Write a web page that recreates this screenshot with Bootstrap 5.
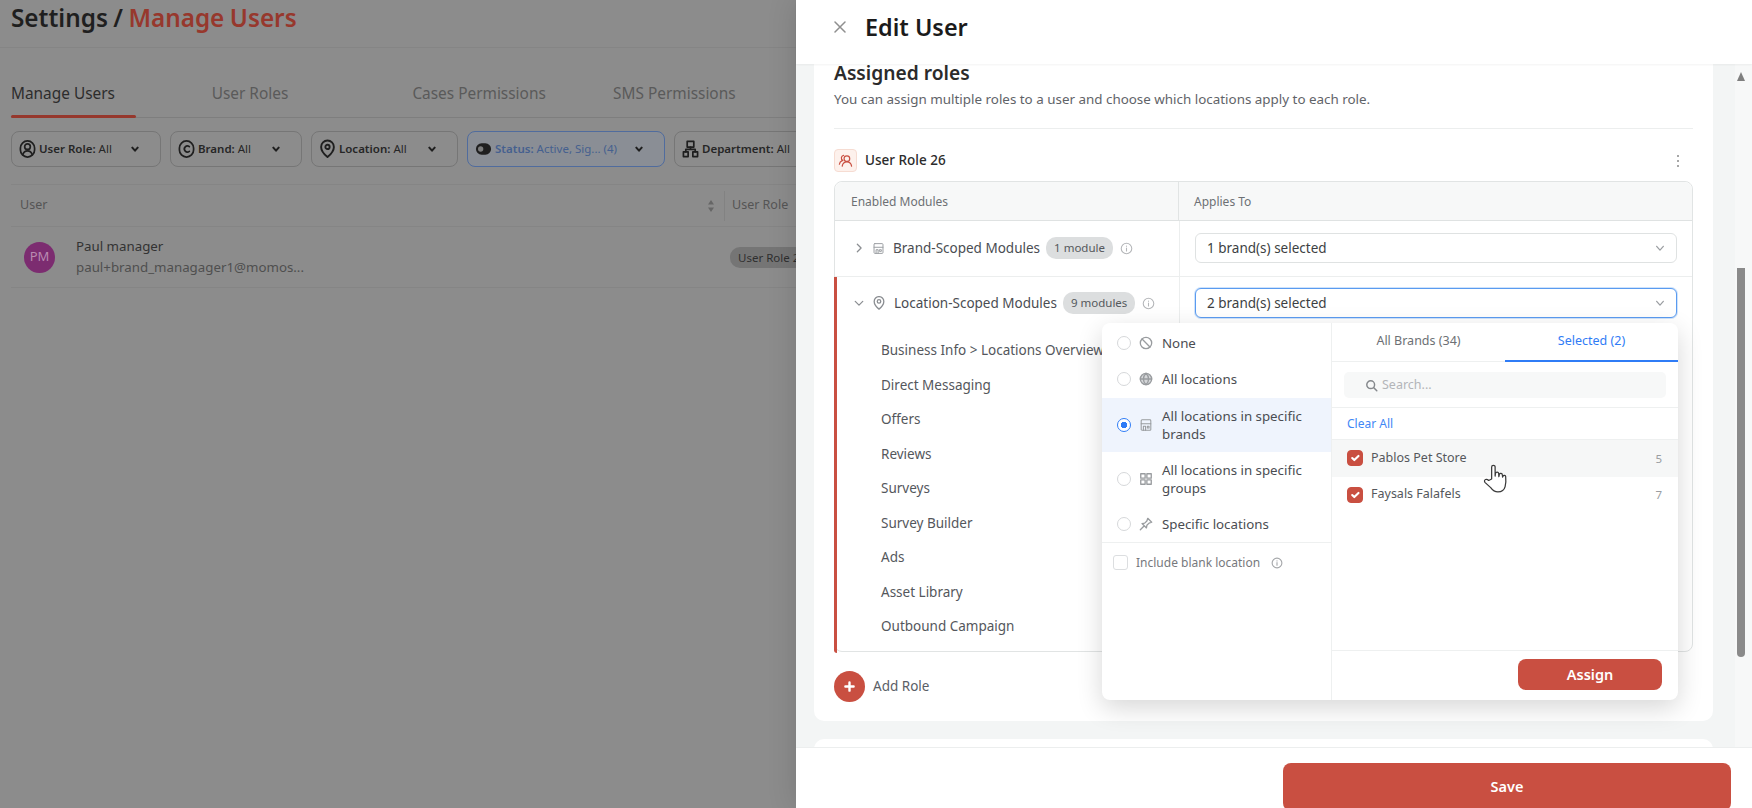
<!DOCTYPE html>
<html lang="en">
<head>
    <meta charset="UTF-8">
    <title>Settings / Manage Users</title>
    <link href="https://cdn.jsdelivr.net/npm/bootstrap@5.3.3/dist/css/bootstrap.min.css" rel="stylesheet">
    <style>
        html, body { height: 808px; overflow: hidden; }
        body { font-family: "Noto Sans", sans-serif; background: #8c8c8c; color: #2b2b2b; }
        .ico { display: block; flex: none; fill: none; stroke: currentColor; stroke-width: 1.8; stroke-linecap: round; stroke-linejoin: round; }

        /* page behind the drawer */
        .page-pane { width: 796px; height: 808px; flex: none; overflow: hidden; background: #8c8c8c; }
        .page-head { height: 48px; padding-left: 11px; border-bottom: 1px solid #858585; font-size: 24.3px; font-weight: 600; line-height: 35px; word-spacing: -.9px; color: #1f1f1f; white-space: nowrap; }
        .page-head span { color: #97382d; }
        .page-tabs { display: grid; grid-template-columns: repeat(4, 200.7px); height: 70px; margin-left: 11px; border-bottom: 1px solid #7e7e7e; font-size: 15.4px; color: #5a5a5a; }
        .page-tabs > div { padding-top: 35px; line-height: 22px; white-space: nowrap; }
        .page-tabs .on { color: #2c2c2c; position: relative; }
        .page-tabs .on::after { content: ""; position: absolute; left: 0; bottom: -1px; width: 125px; height: 3px; background: #96382d; border-radius: 2px; }
        .filter-row { display: flex; gap: 9px; padding: 13px 0 0 11px; }
        .filter-pill { height: 36px; flex: none; display: flex; align-items: center; gap: 3px; padding-left: 7px; border: 1px solid #767676; border-radius: 8px; font-size: 11.5px; color: #262626; white-space: nowrap; }
        .filter-pill b { font-weight: 600; }
        .filter-pill .ico { color: #1f1f1f; }
        .filter-pill .caret { margin-left: auto; margin-right: 21px; stroke-width: 3; }
        .filter-pill.is-blue { border-color: #506c9e; background: #8a8e95; color: #45608f; }
        .user-table { margin: 17px 0 0 11px; width: 1000px; }
        .user-head { height: 43px; display: flex; align-items: center; border-top: 1px solid #858585; border-bottom: 1px solid #858585; font-size: 12.5px; color: #555; }
        .user-head .ucol { width: 714px; padding-left: 9px; display: flex; align-items: center; justify-content: space-between; padding-right: 9px; border-right: 1px solid #828282; height: 30px; }
        .user-head .rcol { padding-left: 7px; }
        .user-row { height: 61px; display: flex; align-items: center; border-bottom: 1px solid #858585; }
        .user-avatar { width: 31px; height: 31px; margin-left: 13px; flex: none; border-radius: 50%; background: #7c2c70; color: #b98ab0; font-size: 13px; display: flex; align-items: center; justify-content: center; }
        .user-info { width: 658px; padding-left: 21px; font-size: 13.3px; line-height: 21px; color: #333; }
        .user-info div + div { color: #4f4f4f; }
        .role-chip { background: #757575; border-radius: 10px; height: 21px; line-height: 21px; padding: 0 8px; font-size: 11.5px; color: #2f2f2f; margin-left: 17px; white-space: nowrap; }

        /* edit drawer */
        .edit-drawer { width: 956px; height: 808px; flex: none; display: flex; flex-direction: column; background: #fff; box-shadow: 0 0 28px rgba(0,0,0,.14); }
        .drawer-top { height: 64px; flex: none; display: flex; align-items: center; gap: 19px; padding: 0 0 10px 38px; background: #fff; box-shadow: 0 1px 2px rgba(0,0,0,.05); position: relative; z-index: 3; }
        .drawer-top h1 { font-size: 23.4px; font-weight: 600; margin: 0; color: #1b1b1b; }
        .drawer-top .ico { color: #8f8f8f; stroke-width: 1.5; }
        .drawer-mid { height: 683px; flex: none; display: flex; background: #f3f5f5; overflow: hidden; }
        .drawer-col { width: 939px; flex: none; padding-left: 18px; }
        .role-card { width: 899px; height: 657px; background: #fff; border-radius: 0 0 10px 10px; padding: 0 20px; }
        .next-card { width: 899px; height: 30px; margin-top: 18px; background: #fff; border-radius: 10px 10px 0 0; }
        .scroll-col { width: 17px; flex: none; background: #f7f8f8; padding-left: 2px; }
        .scroll-arrow { width: 0; height: 0; margin-top: 8px; border-left: 4px solid transparent; border-right: 4px solid transparent; border-bottom: 9px solid #7f7f7f; }
        .scroll-thumb { width: 8px; height: 389px; margin-top: 187px; background: #8a8a8a; border-radius: 0 0 4px 4px; }
        .role-title { font-size: 19.2px; font-weight: 600; line-height: 18px; color: #2b2b2b; }
        .role-sub { font-size: 13.4px; line-height: 18px; margin-top: 8px; color: #5f6368; }
        .role-rule { border-top: 1px solid #eceeee; margin-top: 20px; }
        .role-name { height: 52px; padding-top: 11px; display: flex; align-items: center; gap: 8px; font-size: 13.5px; font-weight: 500; color: #2b2b2b; }
        .role-badge { width: 23px; height: 23px; display: flex; align-items: center; justify-content: center; background: #fdf1ec; border: 1px solid #f6dcd2; border-radius: 4px; color: #c94f41; }
        .role-more { margin-left: auto; margin-right: 13px; color: #8a8a8a; }
        .mod-table { position: relative; height: 471px; border: 1px solid #e1e4e4; border-radius: 8px; }
        .mod-head { height: 39px; display: flex; align-items: center; background: #f7f8f8; border-bottom: 1px solid #dfe2e2; border-radius: 8px 8px 0 0; font-size: 12px; color: #6d7074; }
        .mod-head > div:first-child { width: 344px; height: 100%; display: flex; align-items: center; padding: 1px 0 0 16px; border-right: 1px solid #e1e4e4; }
        .mod-head > div:last-child { padding: 1px 0 0 15px; }
        .mod-row { height: 54.5px; display: flex; align-items: center; }
        .mod-row + .mod-row { border-top: 1px solid #eceeee; }
        .mod-cell { width: 345px; flex: none; height: 100%; display: flex; align-items: center; font-size: 13.5px; color: #4a4d52; border-right: 1px solid #eceeee; padding-left: 19px; white-space: nowrap; }
        .mod-cell .ico { color: #8b8e92; }
        .mod-cell .ico-thin { stroke-width: 1.2; color: #9a9da1; }
        .mod-open { position: relative; }
        .mod-open::before { content: ""; position: absolute; left: -1px; top: 0; height: 376px; width: 3px; background: #c94f41; border-radius: 0 0 0 4px; }
        .mod-count { background: #dcdedf; color: #55585c; border-radius: 10px; height: 22px; line-height: 21px; margin-left: 6px; padding: 0 8px; font-size: 11.5px; font-weight: 400; }
        .mod-info { margin-left: 7px; color: #b4b6b9 !important; stroke-width: 1.3; }
        .brand-picker { width: 482px; height: 30px; margin-left: 15px; display: flex; align-items: center; justify-content: space-between; padding: 0 11px; background: #fff; border: 1px solid #dfe2e2; border-radius: 6px; font-size: 13.5px; color: #3d3f43; }
        .brand-picker .ico { color: #9a9da1; stroke-width: 1.5; }
        .brand-picker.is-open { border: 1.5px solid #5a9bf0; box-shadow: 0 0 0 1px #cfe3fb; }
        .mod-items { padding: 3px 0 0 46px; font-size: 13.5px; color: #54575c; }
        .mod-items div { height: 34.5px; line-height: 34.5px; white-space: nowrap; }
        .add-role { display: flex; align-items: center; gap: 8px; margin-top: 19px; font-size: 13.5px; color: #5a5e66; }
        .add-dot { width: 31px; height: 31px; border-radius: 50%; background: #c94f41; color: #fff; display: flex; align-items: center; justify-content: center; }
        .drawer-foot { height: 61px; flex: none; display: flex; justify-content: flex-end; padding: 15px 21px 0 0; background: #fff; border-top: 1px solid #eceeee; position: relative; z-index: 3; }
        .btn-save { width: 448px; height: 48px; background: #c94f41; border: 0; border-radius: 8px; color: #fff; font-size: 14.5px; font-weight: 600; padding: 0; }

        /* popover over the table */
        .scope-pop { position: absolute; left: 267px; top: 141px; width: 576px; height: 377px; z-index: 2; display: flex; background: #fff; border-radius: 8px; box-shadow: 0 8px 26px rgba(0,0,0,.16); }
        .scope-left { width: 230px; flex: none; border-right: 1px solid #eef0f0; }
        .scope-opt { display: flex; align-items: center; padding-left: 15px; font-size: 13.3px; line-height: 18px; color: #4a4d52; height: 36px; }
        .scope-opt .form-check-input { width: 14px; height: 14px; margin: 0 8px 0 0; flex: none; border-color: #d6d8da; }
        .scope-opt .ico { margin-right: 9px; color: #999c9f; stroke-width: 1.5; }
        .scope-opt.opt-top { height: 39px; }
        .scope-opt.opt-second { padding-bottom: 3px; }
        .scope-opt.opt-tall { height: 54px; }
        .scope-opt.is-sel { background: #eff4fd; }
        .scope-opt.is-sel .form-check-input { border: 1.5px solid #2f7cf6; background-color: #fff; background-image: radial-gradient(circle, #2f7cf6 0 3px, #fff 3.5px); }
        .scope-blank { border-top: 1px solid #eef0f0; display: flex; align-items: center; height: 40px; padding-left: 11px; font-size: 12px; color: #77797d; }
        .scope-blank .form-check-input { width: 15px; height: 15px; margin: 0 8px 0 0; border-color: #dcdee0; }
        .scope-blank .ico { margin-left: 11px; color: #a5a7aa; stroke-width: 1.5; }
        .scope-right { flex: 1; display: flex; flex-direction: column; }
        .scope-tabs { display: grid; grid-template-columns: 1fr 1fr; height: 39px; border-bottom: 1px solid #eef0f0; font-size: 12.5px; color: #6d7074; text-align: center; line-height: 35px; }
        .scope-tabs .on { color: #2f7cf6; border-bottom: 2px solid #2f7cf6; height: 39px; }
        .scope-search { height: 46px; padding: 10px 12px 9px; border-bottom: 1px solid #eef0f0; }
        .scope-search .search-box { height: 26px; display: flex; align-items: center; gap: 4px; padding-left: 21px; background: #f7f8f8; border-radius: 5px; font-size: 12.5px; color: #b3b5b8; }
        .scope-search .ico { color: #85888c; }
        .scope-clear { height: 32px; line-height: 31px; padding-left: 15px; font-size: 12px; color: #3f87f5; border-bottom: 1px solid #eef0f0; }
        .scope-brand { height: 36.5px; display: flex; align-items: center; padding: 0 16px 0 15px; font-size: 12.5px; color: #55585c; }
        .scope-brand.is-hover { background: #f6f7f7; }
        .scope-brand .form-check-input { width: 16px; height: 16px; margin: 0 8px 0 0; background-color: #c94f41; border-color: #c94f41; border-radius: 4px; flex: none; }
        .scope-brand span { margin-left: auto; font-size: 11.5px; color: #9a9da1; }
        .scope-foot { margin-top: auto; height: 50px; border-top: 1px solid #eef0f0; display: flex; justify-content: flex-end; padding: 8px 16px 0 0; }
        .btn-assign { width: 144px; height: 31px; padding: 0; background: #c94f41; border: 0; border-radius: 8px; color: #fff; font-size: 14.5px; font-weight: 600; }
        .hand-cursor { position: absolute; left: 381px; top: 140px; z-index: 4; }
    </style>
</head>
<body>
<svg width="0" height="0" class="position-absolute">
    <symbol id="i-store" viewBox="0 0 16 16"><rect x="2.5" y="2" width="11" height="12" rx="1"/><path d="M2.5 6.500h11M5 14v-4.500h2.500V14M9.500 9.500h2v2h-2z"/></symbol>
    <symbol id="i-pin" viewBox="0 0 16 16"><path d="M8 15s-5.500-4.600-5.500-8.800a5.500 5.500 0 0 1 11 0C13.500 10.400 8 15 8 15z"/><circle cx="8" cy="6.200" r="2"/></symbol>
    <symbol id="i-info" viewBox="0 0 16 16"><circle cx="8" cy="8" r="6.500"/><path d="M8 7.500v3.500M8 5v.2"/></symbol>
    <symbol id="i-down" viewBox="0 0 12 12"><path d="M2 4l4 4.500L10 4"/></symbol>
</svg>

<div class="d-flex">
    <div class="page-pane">
        <div class="page-head">Settings / <span>Manage Users</span></div>
        <div class="page-tabs">
            <div class="on">Manage Users</div>
            <div>User Roles</div>
            <div>Cases Permissions</div>
            <div>SMS Permissions</div>
        </div>
        <div class="filter-row">
            <div class="filter-pill" style="width:150px">
                <svg class="ico" width="17" height="20" viewBox="0 0 18 20"><rect x="1.500" y="1.500" width="15" height="17" rx="7.500"/><circle cx="9" cy="7.500" r="3"/><path d="M4 16c1-3 3-4 5-4s4 1 5 4"/></svg>
                <div><b>User Role:</b> All</div>
                <svg class="ico caret" width="8" height="8" viewBox="0 0 12 12"><path d="M2 4l4 4.500L10 4"/></svg>
            </div>
            <div class="filter-pill" style="width:132px">
                <svg class="ico" width="17" height="20" viewBox="0 0 18 20"><rect x="1.500" y="1.500" width="15" height="17" rx="7.500"/><path d="M12 7.500a3.200 3.200 0 1 0 0 5"/></svg>
                <div><b>Brand:</b> All</div>
                <svg class="ico caret" width="8" height="8" viewBox="0 0 12 12"><path d="M2 4l4 4.500L10 4"/></svg>
            </div>
            <div class="filter-pill" style="width:147px">
                <svg class="ico" width="17" height="20" viewBox="0 0 16 18"><path d="M8 16.500s-6-5-6-9.500a6 6 0 0 1 12 0c0 4.500-6 9.500-6 9.500z"/><circle cx="8" cy="7" r="2"/></svg>
                <div><b>Location:</b> All</div>
                <svg class="ico caret" width="8" height="8" viewBox="0 0 12 12"><path d="M2 4l4 4.500L10 4"/></svg>
            </div>
            <div class="filter-pill is-blue" style="width:198px">
                <svg class="ico" width="17" height="14" viewBox="0 0 18 14"><rect x="1" y="1" width="16" height="12" rx="6" fill="#1f1f1f" stroke="none"/><circle cx="6" cy="7" r="2.800" fill="#7c7c7c" stroke="none"/></svg>
                <div><b>Status:</b> Active, Sig... (4)</div>
                <svg class="ico caret" width="8" height="8" viewBox="0 0 12 12" style="color:#1f1f1f"><path d="M2 4l4 4.500L10 4"/></svg>
            </div>
            <div class="filter-pill" style="width:160px">
                <svg class="ico" width="17" height="20" viewBox="0 0 18 20"><rect x="5.500" y="2" width="7" height="6"/><rect x="1.500" y="13" width="5" height="5"/><rect x="11.500" y="13" width="5" height="5"/><path d="M9 8v2.500H4V13M9 10.500h5V13"/></svg>
                <div><b>Department:</b> All</div>
            </div>
        </div>
        <div class="user-table">
            <div class="user-head">
                <div class="ucol">
                    <span>User</span>
                    <svg width="8" height="14" viewBox="0 0 8 14" fill="#666"><path d="M4 1l3 4.500H1zM4 13L1 8.500h6z"/></svg>
                </div>
                <div class="rcol">User Role</div>
            </div>
            <div class="user-row">
                <div class="user-avatar">PM</div>
                <div class="user-info">
                    <div>Paul manager</div>
                    <div>paul+brand_managager1@momos...</div>
                </div>
                <div class="role-chip">User Role 26</div>
            </div>
        </div>
    </div>

    <div class="edit-drawer">
        <div class="drawer-top">
            <svg class="ico" width="12" height="12" viewBox="0 0 12 12"><path d="M1 1l10 10M11 1L1 11"/></svg>
            <h1>Edit User</h1>
        </div>
        <div class="drawer-mid">
            <div class="drawer-col">
                <div class="role-card">
                    <div class="role-title">Assigned roles</div>
                    <div class="role-sub">You can assign multiple roles to a user and choose which locations apply to each role.</div>
                    <div class="role-rule"></div>
                    <div class="role-name">
                        <div class="role-badge">
                            <svg class="ico" width="15" height="15" viewBox="0 0 16 16" style="stroke-width:1.300"><circle cx="9.500" cy="6" r="3"/><path d="M4.500 14c.5-3 2.500-4.500 5-4.500s4.500 1.500 5 4.500M6 2.500a3 3 0 0 0-.8 5.600M1.500 12c.3-1.800 1.200-3 2.500-3.600"/></svg>
                        </div>
                        User Role 26
                        <svg class="role-more" width="4" height="14" viewBox="0 0 4 14" fill="currentColor"><circle cx="2" cy="2" r="1"/><circle cx="2" cy="7" r="1"/><circle cx="2" cy="12" r="1"/></svg>
                    </div>
                    <div class="mod-table">
                        <div class="mod-head">
                            <div>Enabled Modules</div>
                            <div>Applies To</div>
                        </div>
                        <div class="mod-row">
                            <div class="mod-cell">
                                <svg class="ico me-2" width="10" height="10" viewBox="0 0 12 12" style="stroke-width:1.500"><path d="M4 1.500L8.500 6 4 10.500"/></svg>
                                <svg class="ico ico-thin me-2" width="13" height="13"><use href="#i-store"/></svg>
                                Brand-Scoped Modules
                                <span class="mod-count">1 module</span>
                                <svg class="ico mod-info" width="13" height="13"><use href="#i-info"/></svg>
                            </div>
                            <div class="brand-picker">1 brand(s) selected <svg class="ico" width="10" height="10"><use href="#i-down"/></svg></div>
                        </div>
                        <div class="mod-row mod-open">
                            <div class="mod-cell">
                                <svg class="ico me-2" width="10" height="10" viewBox="0 0 12 12" style="stroke-width:1.500"><path d="M1.500 4L6 8.500 10.500 4"/></svg>
                                <svg class="ico me-2" width="14" height="14" style="stroke-width:1.500"><use href="#i-pin"/></svg>
                                Location-Scoped Modules
                                <span class="mod-count">9 modules</span>
                                <svg class="ico mod-info" width="13" height="13"><use href="#i-info"/></svg>
                            </div>
                            <div class="brand-picker is-open">2 brand(s) selected <svg class="ico" width="10" height="10"><use href="#i-down"/></svg></div>
                        </div>
                        <div class="mod-items">
                            <div>Business Info &gt; Locations Overview</div>
                            <div>Direct Messaging</div>
                            <div>Offers</div>
                            <div>Reviews</div>
                            <div>Surveys</div>
                            <div>Survey Builder</div>
                            <div>Ads</div>
                            <div>Asset Library</div>
                            <div>Outbound Campaign</div>
                        </div>

                        <div class="scope-pop">
                            <div class="scope-left">
                                <div class="scope-opt opt-top">
                                    <input class="form-check-input" type="radio" name="scope">
                                    <svg class="ico" width="14" height="14" viewBox="0 0 16 16"><circle cx="8" cy="8" r="6.500"/><path d="M3.500 3.500l9 9"/></svg>
                                    None
                                </div>
                                <div class="scope-opt opt-second">
                                    <input class="form-check-input" type="radio" name="scope">
                                    <svg class="ico" width="14" height="14" viewBox="0 0 16 16"><circle cx="8" cy="8" r="6.500" fill="#d5d7d9"/><path d="M1.500 8h13M8 1.500c-4 4-4 9 0 13M8 1.500c4 4 4 9 0 13"/></svg>
                                    All locations
                                </div>
                                <div class="scope-opt opt-tall is-sel">
                                    <input class="form-check-input" type="radio" name="scope" checked>
                                    <svg class="ico" width="14" height="14" style="stroke-width:1.200"><use href="#i-store"/></svg>
                                    <div>All locations in specific<br>brands</div>
                                </div>
                                <div class="scope-opt opt-tall">
                                    <input class="form-check-input" type="radio" name="scope">
                                    <svg class="ico" width="14" height="14" viewBox="0 0 16 16"><rect x="2" y="2" width="5" height="5"/><rect x="9" y="2" width="5" height="5"/><rect x="2" y="9" width="5" height="5"/><rect x="9" y="9" width="5" height="5"/></svg>
                                    <div>All locations in specific<br>groups</div>
                                </div>
                                <div class="scope-opt">
                                    <input class="form-check-input" type="radio" name="scope">
                                    <svg class="ico" width="14" height="14" viewBox="0 0 16 16"><path d="M10 1.500l4.500 4.500-3 1-2.500 2.500-.5 3-5-5 3-.5L9 4.500zM5.500 10.500L1.500 14.500"/></svg>
                                    Specific locations
                                </div>
                                <div class="scope-blank">
                                    <input class="form-check-input" type="checkbox">
                                    Include blank location
                                    <svg class="ico" width="12" height="12"><use href="#i-info"/></svg>
                                </div>
                            </div>
                            <div class="scope-right">
                                <div class="scope-tabs">
                                    <div>All Brands (34)</div>
                                    <div class="on">Selected (2)</div>
                                </div>
                                <div class="scope-search">
                                    <div class="search-box">
                                        <svg class="ico" width="13" height="13" viewBox="0 0 16 16"><circle cx="7" cy="7" r="4.800"/><path d="M10.500 10.500l4 4"/></svg>
                                        Search...
                                    </div>
                                </div>
                                <div class="scope-clear">Clear All</div>
                                <div class="scope-brand is-hover">
                                    <input class="form-check-input" type="checkbox" checked>
                                    Pablos Pet Store
                                    <span>5</span>
                                </div>
                                <div class="scope-brand">
                                    <input class="form-check-input" type="checkbox" checked>
                                    Faysals Falafels
                                    <span>7</span>
                                </div>
                                <div class="scope-foot">
                                    <button class="btn btn-assign" type="button">Assign</button>
                                </div>
                            </div>
                            <svg class="hand-cursor" width="25" height="32" viewBox="0 0 26 32" fill="#fff" stroke="#3a3a3a" stroke-width="1.300" stroke-linejoin="round" stroke-linecap="round"><path d="M9 16V3.500a1.800 1.800 0 0 1 3.600 0V13l.4-3a1.700 1.700 0 0 1 3.300.300L16.500 13.500l.5-2.300a1.600 1.600 0 0 1 3.100.400l.3 2.400.4-1a1.500 1.500 0 0 1 2.800.600c.3 3 .2 7.500-.6 10.400-.8 3.200-3.400 5.500-7.500 5.500-3.800 0-5.500-1.700-7.500-4.500L2 19.500c-.8-1.200-.5-2.500.6-3 1.200-.5 2.300 0 3.300 1z"/></svg>
                        </div>
                    </div>
                    <div class="add-role">
                        <div class="add-dot"><svg class="ico" width="11" height="11" viewBox="0 0 12 12" style="stroke-width:2.600"><path d="M6 1.500v9M1.500 6h9"/></svg></div>
                        Add Role
                    </div>
                </div>
                <div class="next-card"></div>
            </div>
            <div class="scroll-col">
                <div class="scroll-arrow"></div>
                <div class="scroll-thumb"></div>
            </div>
        </div>
        <div class="drawer-foot">
            <button class="btn btn-save" type="button">Save</button>
        </div>
    </div>
</div>
</body>
</html>
